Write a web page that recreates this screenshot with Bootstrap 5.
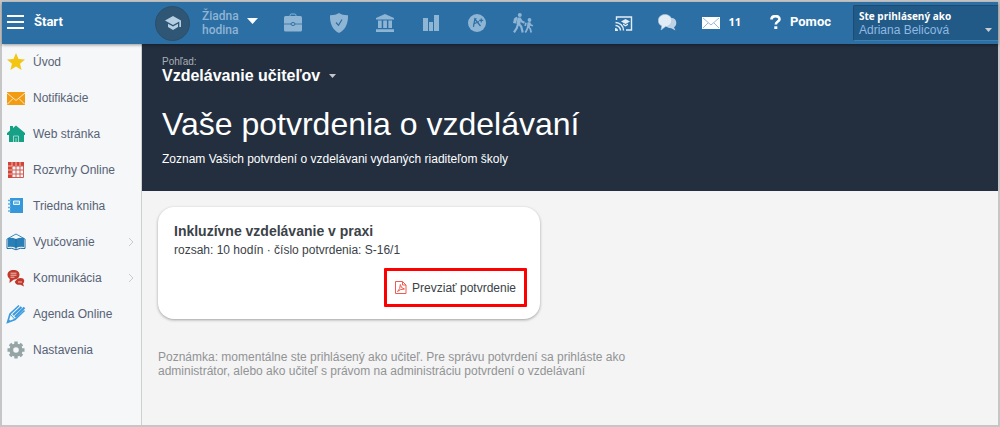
<!DOCTYPE html>
<html lang="sk">
<head>
<meta charset="utf-8">
<meta name="viewport" content="width=device-width, initial-scale=1">
<title>Vaše potvrdenia o vzdelávaní</title>
<link href="https://cdn.jsdelivr.net/npm/bootstrap@5.3.0/dist/css/bootstrap.min.css" rel="stylesheet">
<style>
body{font-family:"Liberation Sans",Arial,sans-serif;font-size:12px;line-height:14px;background:#f4f4f4;color:#3b4248}
.frame{min-height:100vh;border:2px solid #c6c6c6}
.topbar{height:42px;background:#2c6fa5;color:#fff;position:relative;z-index:2;box-shadow:0 1px 3px rgba(0,0,0,.4)}
.plain,.action{background:none;border:0;color:inherit;line-height:inherit}
svg{display:block;flex:none}
.start{width:140px;padding:0 0 2px 5px;gap:10px;font:bold 13px/16px Roboto,sans-serif}
.lesson{gap:8px;margin-left:13px;color:#90b4d3;font:500 12px/14px Roboto,sans-serif;text-align:left}
.lesson svg{margin-bottom:4px}
.disc{width:35px;height:35px;border-radius:50%;background:#2f5674;border:1px solid #2b4f6c;display:grid;place-items:center;color:#b5cee2}
.disc svg{margin:0}
.tools{color:#8fb5d5;gap:26px;margin-left:25px}
.right-tools{gap:25px;margin-right:22px}
.help{font:bold 13px/16px Roboto,sans-serif;gap:9px;padding-bottom:2px}
.count{font:bold 11px/14px "Open Sans",sans-serif;padding-bottom:2px}
.user{width:145px;height:36px;padding:3px 6px 0 5px;background:#225a87;border:1px solid #1c4c74;border-right:0;border-bottom-color:#3e7eb1;border-radius:2px 0 0 2px;color:#8fb9e3;text-align:left}
.user strong{font:bold 10px/14px "Open Sans",sans-serif;color:#fff}
.side{width:140px;flex:none;background:#f5f7f9;border-right:1px solid #cfcfcf}
.side a{height:36px;padding:0 7px 0 4px;gap:7px;color:#576275;text-decoration:none}
.hero{background:#232f3f;color:#fff;padding:12px 20px 25px}
.eyebrow{font-size:10px;line-height:12px;color:#a9aeb5}
.view{font-size:16px;line-height:16px;font-weight:bold;gap:9px}
.hero h1{font-size:32px;line-height:38px;font-weight:400;margin:21px 0 9px}
.content{padding:16px}
.cert{max-width:382px;padding:16px 13px 12px 16px;border:0;border-radius:16px;background:#fff;box-shadow:0 1px 3px rgba(0,0,0,.35)}
.cert h2{font-size:14px;line-height:16px;font-weight:bold;margin:0 0 3px}
.cert p{line-height:16px;margin:0 0 10px}
.action{border:3px solid #f00;border-radius:1px;height:39px;padding:0 8px;gap:5px}
.note{max-width:480px;margin:31px 0 0;color:#919394}
</style>
</head>
<body>
<div class="frame d-flex flex-column">
<header class="topbar d-flex align-items-center">
  <button class="plain start d-flex align-items-center" type="button">
    <svg width="17" height="14" viewBox="0 0 17 14" fill="none" stroke="currentColor" stroke-width="2"><path d="M0 1h17M0 7h17M0 13h17"/></svg>Štart
  </button>
  <button class="plain lesson d-flex align-items-center p-0" type="button">
    <span class="disc"><svg width="16" height="15" viewBox="0 0 16 15" fill="currentColor"><path d="M8 0 0 4.500 8 9l6.300-3.600V11H16V4.500zM3 7.700v3.400L8 14l5-2.900V7.700L8 10.500z"/></svg></span>
    <span class="ms-1">Žiadna<br>hodina</span>
    <svg width="11" height="6" viewBox="0 0 11 6"><path d="M0 0h11L5.500 6z" fill="#fff"/></svg>
  </button>
  <nav class="tools d-flex align-items-center" aria-label="Nástroje">
    <svg width="20" height="20" viewBox="0 0 20 20"><path d="M7 3.500V2.500Q7 1 8.500 1h3Q13 1 13 2.500v1" fill="none" stroke="currentColor"/><rect x="1" y="3" width="18" height="15.500" rx="1.500" fill="currentColor"/><path d="M1 11h7M12 11h7" stroke="#2c6fa5" stroke-width=".8"/><ellipse cx="10" cy="11" rx="2" ry="1.500" fill="none" stroke="#2c6fa5"/></svg>
    <svg width="20" height="20" viewBox="0 0 20 20"><path d="M10 0c2.500 1.600 5.500 2.300 9 2.200C19.300 10 16.500 17 10 20 3.500 17 .7 10 1 2.200 4.500 2.300 7.500 1.600 10 0z" fill="currentColor"/><path d="m7 9.500 2.500 2.800L13 6.500" fill="none" stroke="#2c6fa5" stroke-width="1.200"/></svg>
    <svg width="20" height="20" viewBox="0 0 20 20" fill="currentColor"><path d="M10 1 1 5v1.500h18V5zM3 7.500h3.700V15H3zM8.200 7.500h3.700V15H8.200zM13.400 7.500H17V15h-3.600zM1 16.200h18V19H1z"/></svg>
    <svg width="20" height="20" viewBox="0 0 20 20" fill="currentColor"><path d="M2 5h5v13H2zM8 9h4v9H8zM13 2h5v16h-5z"/></svg>
    <svg width="20" height="20" viewBox="0 0 20 20"><circle cx="10" cy="10" r="9" fill="currentColor"/><path d="M6.500 14 7.800 6l5.700 7M6 11.200l6-2.700M12.200 7.400h4M14.200 5.400v4M7.800 6l1.700-.5" fill="none" stroke="#2c6fa5" stroke-width="1.200"/></svg>
    <svg width="20" height="20" viewBox="0 0 20 20" fill="currentColor"><circle cx="6.800" cy="2" r="2"/><path d="m1 5.500 2.400-1.700 1 1.200L3 10.500 0 10z"/><path d="M4.500 4.500h3.300L7.500 10l-.5 1.500-3.500-.5z"/><path d="m5.500 10.500 2.700 3 1.500 6M5 11 3.800 15 1 19.300M7 5.500l1.700 3 2.800 1.200" fill="none" stroke="currentColor" stroke-width="2.200"/><circle cx="16.500" cy="7" r="1.900"/><path d="M14.500 9.300h2.700l-.3 5h-3z"/><path d="m15.500 13.800 1.800 2 .9 3.700M14.800 14 13.800 17l-1.500 2.500M16.500 10l1.200 2 2.200.8M13 9.800l-.8 3.200" fill="none" stroke="currentColor" stroke-width="1.700"/></svg>
  </nav>
  <div class="right-tools d-flex align-items-center ms-auto">
    <svg width="18" height="15" viewBox="0 0 18 15"><path d="M1.500 4V1h15v13H11" fill="none" stroke="#e3edf6" stroke-width="1.400"/><path d="M.5 6.500A8 8 0 0 1 8.500 14.500M.5 9.500a5 5 0 0 1 5 5" fill="none" stroke="#e3edf6" stroke-width="1.400"/><path d="M0 12a3 3 0 0 1 3 3H0zM6 5.500 10.500 3 15 5.500 10.500 8zM8 7.400l2.500 1.500L13 7.400v1.500l-2.500 1.500L8 8.900z" fill="#e3edf6"/></svg>
    <svg width="19" height="18" viewBox="0 0 19 18"><path d="M12 4c4-.5 6.300 1.700 6.300 4.700 0 2-.8 3.500-2.300 4.500l1.500 3.300-4.300-2.300C9 14 7 12 7 9z" fill="#bdd2e5"/><path d="M7 .5c4 0 6.700 2.600 6.700 6S11 12.600 7.500 12.600L3 16l.8-4C1.500 11 .3 9 .3 6.600.3 3 3.200.5 7 .5z" fill="#e2ecf5" stroke="#a6c2da" stroke-width=".6"/></svg>
    <span class="d-flex align-items-center gap-2"><svg width="18" height="12" viewBox="0 0 18 12"><path d="M0 0h18v12H0z" fill="#fff"/><path d="m1 1 8 7 8-7M1 11l5-5M17 11l-5-5" fill="none" stroke="#8ab2d2" stroke-width=".9"/></svg><span class="count">11</span></span>
    <a class="help d-flex align-items-center text-white text-decoration-none ms-1" href="#"><svg width="11" height="14" viewBox="0 0 11 14"><path d="M1.500 4.500C1.500 0 9.500 0 9.500 4.200c0 2.400-3.700 2.300-3.700 5.300" fill="none" stroke="#fff" stroke-width="2.600"/><path d="M4.300 11.300h3V14h-3z" fill="#fff"/></svg>Pomoc</a>
  </div>
  <button class="user d-flex flex-column" type="button">
    <strong>Ste prihlásený ako</strong>
    <span class="d-flex align-items-center justify-content-between w-100">Adriana Belicová <svg width="7" height="4" viewBox="0 0 7 4"><path d="M0 0h7L3.500 4z" fill="#c6cdd4"/></svg></span>
  </button>
</header>
<div class="d-flex flex-grow-1">
  <nav class="side" aria-label="Hlavné menu">
    <a class="d-flex align-items-center" href="#"><svg width="20" height="20" viewBox="0 0 20 20"><path d="m10 1 2.500 6 6.500.5-5 4.200 1.600 6.300L10 14.600 4.400 18 6 11.700 1 7.500 7.500 7z" fill="#f3c613"/></svg>Úvod</a>
    <a class="d-flex align-items-center" href="#"><svg width="20" height="20" viewBox="0 0 20 20"><path d="M1 4h18v13H1z" fill="#f39c12"/><path d="m1 5 9 7.500L19 5M1 16.500l6-6M19 16.500l-6-6" fill="none" stroke="#fde9c8"/></svg>Notifikácie</a>
    <a class="d-flex align-items-center" href="#"><svg width="20" height="20" viewBox="0 0 20 20"><path d="m1 9 3-2.500V2h3v2l3-2.500L19 9v2h-1v7H3v-7H1z" fill="#16a085"/><path d="M7.500 18v-6h5v6M10 14v4" fill="none" stroke="#9cd8cb"/></svg>Web stránka</a>
    <a class="d-flex align-items-center" href="#"><svg width="20" height="20" viewBox="0 0 20 20"><path d="M2 2h16v4H6v12H2z" fill="#cf4638"/><path d="M6 6h11.500v11.500H6zM10 6v12M14 6v12M6 10h12M6 14h12" fill="none" stroke="#d05a50"/><path d="M6 2v4M10 2v4M14 2v4M2 6h4M2 10h4M2 14h4" stroke="#f5b5ae"/></svg>Rozvrhy Online</a>
    <a class="d-flex align-items-center" href="#"><svg width="20" height="20" viewBox="0 0 20 20"><path d="M4 2h13v15H4z" fill="#3498db"/><path d="M2 4.500h3M2 8h3M2 11.500h3M2 15h3" stroke="#62aee2" stroke-width="1.500"/><path d="M7.500 5h6v3.500h-6z" fill="#75b9e7" stroke="#e5f3fc"/></svg>Triedna kniha</a>
    <a class="d-flex align-items-center" href="#"><svg width="20" height="20" viewBox="0 0 20 20"><path d="m1 7 9-5 9 5" fill="none" stroke="#3c8cbd"/><path d="M2 6q4-1 8 1 4-2 8-1v9q-4-1-8 1-4-2-8-1z" fill="#2980b9"/><path d="M1 7v9.500q5-1 9 1.300 4-2.300 9-1.300V7M10 7v10" fill="none" stroke="#236d9e"/></svg>Vyučovanie<svg class="ms-auto" width="6" height="10" viewBox="0 0 6 10"><path d="m1 1 4 4-4 4" fill="none" stroke="#ccc"/></svg></a>
    <a class="d-flex align-items-center" href="#"><svg width="20" height="20" viewBox="0 0 20 20"><path d="M11.500 10.500q6-1.500 6.700 2 .3 2-1.200 3l1 3-3.500-1.800q-5 .6-5.700-3z" fill="#c0392b"/><path d="M7.500 2c3.700 0 6 2 6 4.800s-2.400 4.900-6 4.900L3.500 15l.3-4C2.200 10 1.500 8.500 1.500 6.800 1.500 4 4 2 7.500 2z" fill="#c0392b"/><path d="M4.500 5.200h6M4.500 7.200h6M4.500 9.200h4M12 14h4" stroke="#edc3be"/></svg>Komunikácia<svg class="ms-auto" width="6" height="10" viewBox="0 0 6 10"><path d="m1 1 4 4-4 4" fill="none" stroke="#ccc"/></svg></a>
    <a class="d-flex align-items-center" href="#"><svg width="20" height="20" viewBox="0 0 20 20" fill="none" stroke="#3d9bdd" stroke-width="1.600"><path d="M13 1.500 4 10l-2.500 8.500L9 15.500l9.500-9"/><path d="M15.500 3 7 11M18.500 3.500 9 13" stroke-width="2.200"/><path d="m4 10 5 5.500" stroke-width="1"/><path d="m1.500 18.500 1-3.500 2 2z" fill="#3d9bdd" stroke="none"/></svg>Agenda Online</a>
    <a class="d-flex align-items-center" href="#"><svg width="20" height="20" viewBox="0 0 20 20" fill="none" stroke="#95a5a6"><circle cx="10" cy="10" r="4.700" stroke-width="3.800"/><path d="M10 1.500V5M10 15v3.500M1.500 10H5M15 10h3.500M4 4l2.500 2.500M13.500 13.500 16 16M4 16l2.500-2.500M13.500 6.500 16 4" stroke-width="3.400"/></svg>Nastavenia</a>
  </nav>
  <main class="flex-grow-1">
    <section class="hero">
      <div class="eyebrow">Pohľad:</div>
      <button class="plain view d-flex align-items-center p-0" type="button">Vzdelávanie učiteľov <svg width="7" height="4" viewBox="0 0 7 4"><path d="M0 0h7L3.500 4z" fill="#c3c6ca"/></svg></button>
      <h1>Vaše potvrdenia o vzdelávaní</h1>
      <p class="m-0">Zoznam Vašich potvrdení o vzdelávani vydaných riaditeľom školy</p>
    </section>
    <section class="content">
      <article class="cert d-flex flex-column">
        <h2>Inkluzívne vzdelávanie v praxi</h2>
        <p>rozsah: 10 hodín · číslo potvrdenia: S-16/1</p>
        <button class="action d-flex align-items-center align-self-end" type="button"><svg width="12" height="13" viewBox="0 0 12 13" fill="none" stroke="#ee5b4f"><path d="M.5.5h7l3.500 3.500v8.500H.5zM7.500.5V4H11M2.500 10.500Q5.500 8 5.300 3.500 6 7.500 9.500 8 5 8 2.500 10.500z"/></svg>Prevziať potvrdenie</button>
      </article>
      <p class="note">Poznámka: momentálne ste prihlásený ako učiteľ. Pre správu potvrdení sa prihláste ako administrátor, alebo ako učiteľ s právom na administráciu potvrdení o vzdelávaní</p>
    </section>
  </main>
</div>
</div>
<script src="https://cdn.jsdelivr.net/npm/bootstrap@5.3.0/dist/js/bootstrap.bundle.min.js"></script>
</body>
</html>
